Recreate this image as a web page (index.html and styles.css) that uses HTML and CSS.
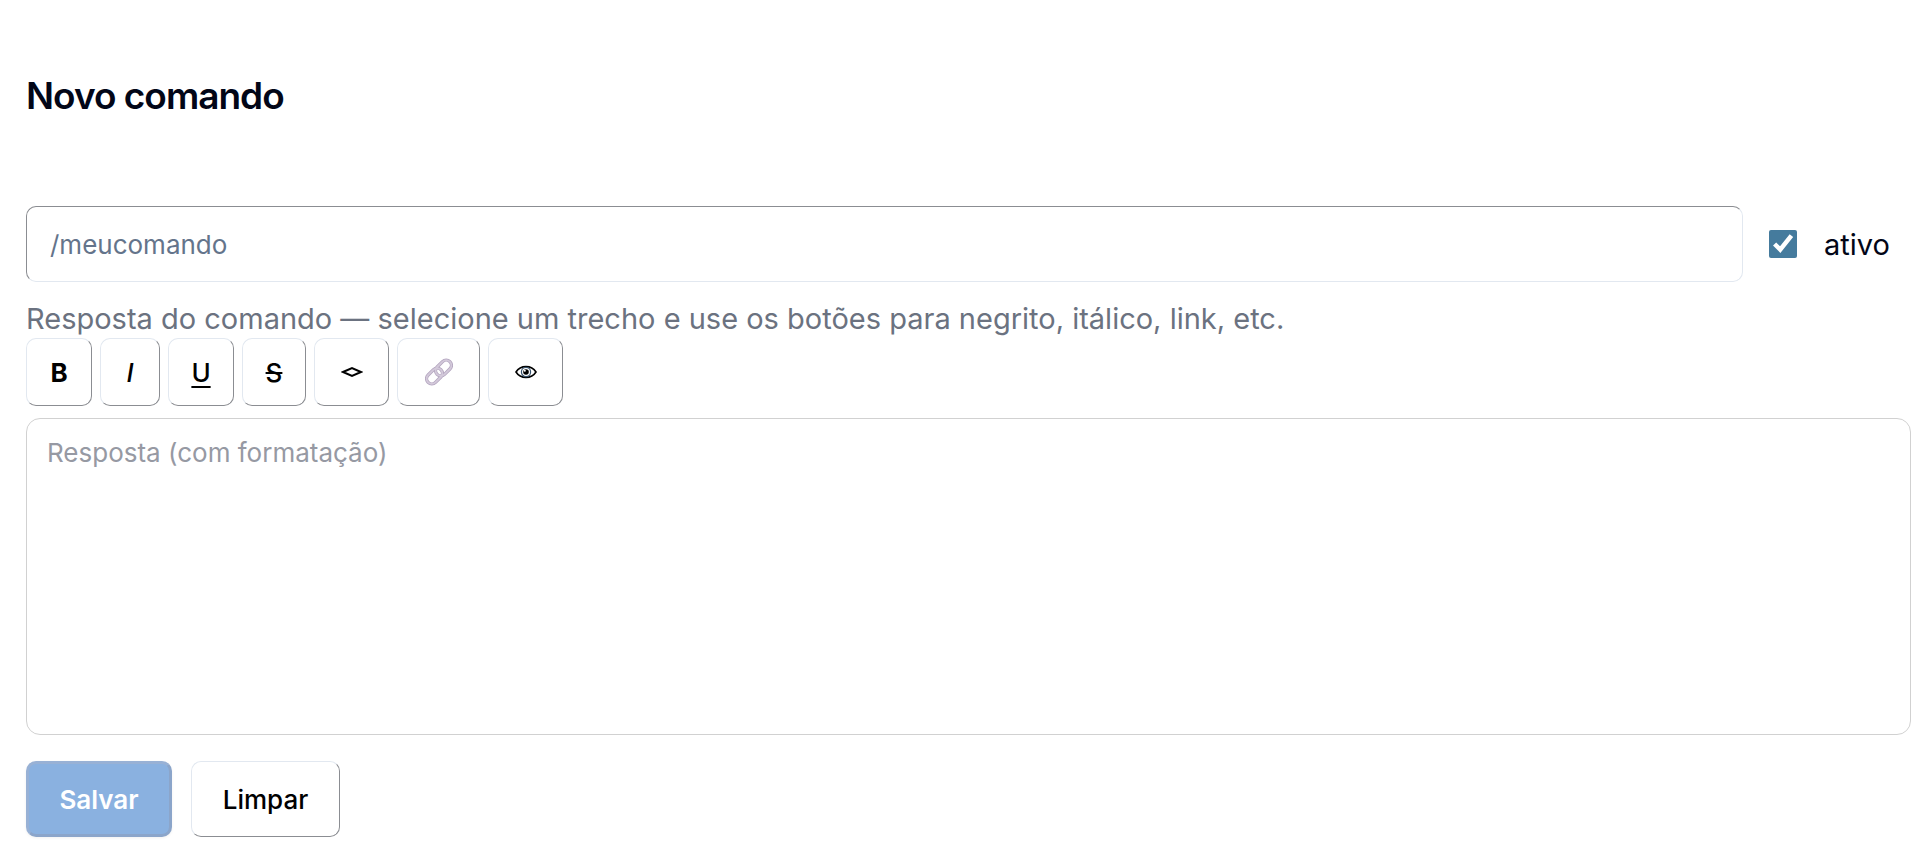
FILE: index.html
```html
<!DOCTYPE html>
<html lang="pt-BR">
<head>
  <meta charset="UTF-8">
  <meta name="viewport" content="width=device-width, initial-scale=1.0">
  <title>Novo comando</title>
  <link rel="stylesheet" href="styles.css">
</head>
<body>
  <h1>Novo comando</h1>

  <form id="command-form">
    <div class="command-row">
      <input type="text" id="command" name="command" class="command-input" placeholder="/meucomando" aria-label="Comando">
      <label class="active-label" for="active">
        <input type="checkbox" id="active" name="active" checked>
        ativo
      </label>
    </div>

    <label class="help" for="response">Resposta do comando — selecione um trecho e use os botões para negrito, itálico, link, etc.</label>

    <div class="toolbar">
      <button type="button" class="tool bold" aria-label="Negrito">B</button>
      <button type="button" class="tool italic" aria-label="Itálico">I</button>
      <button type="button" class="tool underline" aria-label="Sublinhado">U</button>
      <button type="button" class="tool strike" aria-label="Tachado">S</button>
      <button type="button" class="tool medium" aria-label="Código">
        <svg width="22" height="12" viewBox="0 0 22 12" fill="none" stroke="#000" stroke-width="2">
          <path d="M2 6 11 2 20 6 11 10Z"/>
        </svg>
      </button>
      <button type="button" class="tool wide" aria-label="Link">
        <svg width="28" height="28" viewBox="0 0 28 28" fill="none">
          <g stroke="#b3a5bf" stroke-width="3.4">
            <rect x="9.5" y="4.8" width="18" height="10.4" rx="5.2" transform="rotate(-45 18.5 10)"/>
            <rect x="0.5" y="12.8" width="18" height="10.4" rx="5.2" transform="rotate(-45 9.5 18)"/>
          </g>
          <g stroke="#d3c9da" stroke-width="1.8">
            <rect x="9.5" y="4.8" width="18" height="10.4" rx="5.2" transform="rotate(-45 18.5 10)"/>
            <rect x="0.5" y="12.8" width="18" height="10.4" rx="5.2" transform="rotate(-45 9.5 18)"/>
          </g>
        </svg>
      </button>
      <button type="button" class="tool medium" aria-label="Visualizar">
        <svg width="22" height="14" viewBox="0 0 22 14" fill="none" stroke="#000">
          <path d="M1 7C5.5-.2 16.5-.2 21 7 16.5 14.2 5.5 14.2 1 7Z" stroke-width="1.6"/>
          <circle cx="11" cy="7" r="4.6" stroke="#35506b" stroke-width="1.2"/>
          <circle cx="11" cy="7" r="2.8" fill="#000" stroke="none"/>
          <circle cx="9.8" cy="5.8" r="1" fill="#fff" stroke="none"/>
        </svg>
      </button>
    </div>

    <textarea id="response" name="response" class="editor" placeholder="Resposta (com formatação)"></textarea>

    <div class="actions">
      <button type="submit" class="action save">Salvar</button>
      <button type="reset" class="action clear">Limpar</button>
    </div>
  </form>
</body>
</html>
```
FILE: styles.css
```css
* {
  box-sizing: border-box;
}
body {
  margin: 0;
  padding: 72px 18px 20px 26px;
  background-color: #fff;
  color: #020617;
  font-family: Inter, "Liberation Sans", sans-serif;
  font-size: 29px;
}
h1 {
  margin: 0 0 86px;
  font-size: 37px;
  font-weight: 600;
  line-height: 48px;
  letter-spacing: -1px;
}
input, textarea, button {
  font-family: inherit;
}
.command-row {
  display: flex;
  align-items: center;
  gap: 26px;
}
.command-input {
  flex: 1;
  min-width: 0;
  height: 76px;
  padding: 0 23px;
  border: 1px solid;
  border-color: #8b8d92 #e2e8f0 #e2e8f0 #8b8d92;
  border-radius: 10px;
  background-color: #fff;
  font-size: 26px;
}
.command-input::placeholder {
  color: #64748b;
  opacity: 1;
}
.active-label {
  display: flex;
  align-items: center;
  gap: 27px;
  padding-right: 21px;
}
.active-label input {
  width: 28px;
  height: 28px;
  margin: 0;
  accent-color: #457b9d;
}
.help {
  display: block;
  margin-top: 18px;
  color: #6b7280;
  line-height: 38px;
}
.toolbar {
  display: flex;
  gap: 8px;
}
.tool {
  display: flex;
  align-items: center;
  justify-content: center;
  width: 66px;
  height: 68px;
  padding: 0;
  border: 1px solid;
  border-color: #e2e8f0 #8b8d92 #8b8d92 #e2e8f0;
  border-radius: 10px;
  background-color: #fff;
  color: #000;
  font-size: 26px;
  font-weight: 500;
  cursor: pointer;
}
.bold {
  font-weight: 700;
}
.italic {
  width: 60px;
  font-style: italic;
}
.underline {
  text-decoration: underline;
  text-decoration-thickness: 2px;
  text-underline-offset: 4px;
}
.strike {
  width: 64px;
  text-decoration: line-through;
}
.medium {
  width: 75px;
}
.wide {
  width: 83px;
}
.editor {
  display: block;
  width: 100%;
  height: 317px;
  margin-top: 12px;
  padding: 14px 20px;
  border: 1px solid #d1d1d1;
  border-radius: 14px;
  background-color: #fff;
  font-size: 26px;
  line-height: 39px;
  resize: none;
}
.editor::placeholder {
  color: #9699a3;
  opacity: 1;
}
.actions {
  display: flex;
  gap: 19px;
  margin-top: 26px;
}
.action {
  height: 76px;
  border-radius: 10px;
  font-size: 26px;
  font-weight: 500;
  cursor: pointer;
}
.save {
  min-width: 146px;
  border: 3px solid;
  border-color: #98b1d5 #8ba5ca #8ba5ca #98b1d5;
  background-color: #8ab1e0;
  box-shadow: 0 1px 3px rgba(0, 0, 0, 0.06);
  color: #fff;
  font-weight: 600;
}
.clear {
  min-width: 149px;
  border: 1px solid;
  border-color: #e2e8f0 #8b8d92 #8b8d92 #e2e8f0;
  background-color: #fff;
  color: #000;
}
```
